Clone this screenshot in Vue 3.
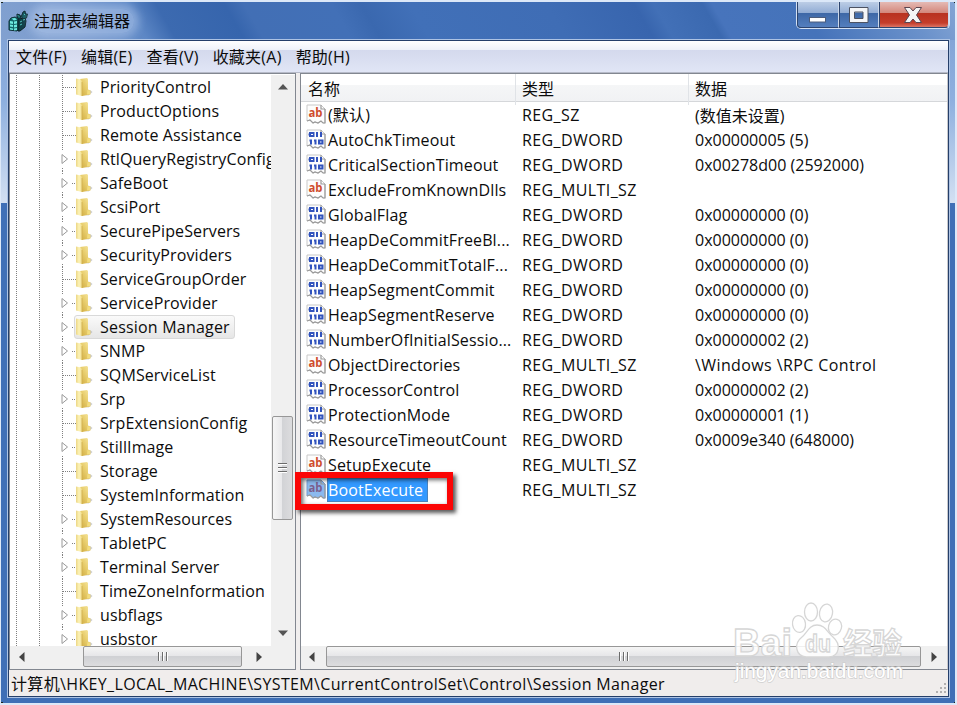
<template>
  <div class="window">
    <span class="corner top-left"></span>
    <span class="corner top-right"></span>
    <span class="corner bottom-left"></span>
    <span class="corner bottom-right"></span>

    <header class="title-bar">
      <div class="title">
        <svg class="app-icon" width="22" height="22" viewBox="0 0 22 22">
          <path d="M1 11l2-3 4-1 4 2v10l-2 2-8-1z" fill="#12686c" stroke="#0e3036" />
          <path d="M2 11l3 .5v2.500L2 13.500zM6 11.500l3-.5v2.500L6 14zM2 14.500l3 .5v2l-3-.5zM6 15l3-.5V17l-3 .5zM2 18l3 .5v1.500l-3-.5zM6 18.500l3-.5v2l-3 .5zM3.500 8.500L7 8l2 1.500-3 1z" fill="#6deae0" />
          <path d="M10 9l7-1 1 3-1 6-5 4h-2z" fill="#0f3f46" stroke="#0a2025" />
          <path d="M9 4l3 1 1 3-2 1-2-2zM15 2l2-1 .5 3 2 0-1 4-4 1-1-3z" fill="#175c62" stroke="#0f2b30" />
          <path d="M10 5.500l1 1M16 4l1 1M12 12l2-1M15 10l2-.5M12 15l2-1" stroke="#54c4bf" />
        </svg>
        <span class="title-text">注册表编辑器</span>
      </div>
      <div class="controls">
        <button class="control minimize" title="最小化">
          <svg width="20" height="20" viewBox="0 0 20 20">
            <rect x="1.500" y="12.500" width="16" height="4.500" fill="#fff" stroke="#4c5d7c" />
          </svg>
        </button>
        <button class="control maximize" title="最大化">
          <svg width="20" height="20" viewBox="0 0 20 20">
            <path d="M.5 2.500h18.500v15H.5zM5.500 7v6.500h8.500V7z" fill="#f4f5f7" fill-rule="evenodd" stroke="#4c5262" />
          </svg>
        </button>
        <button class="control close" title="关闭">
          <svg width="20" height="20" viewBox="0 0 20 20">
            <path d="M.5 2.500h5.500L9 6l3-3.500h5.500L12.500 10l5 7.500H12L9 14l-3 3.500H.5l5-7.500z" fill="#f5f5f5" stroke="#5b4550" />
          </svg>
        </button>
      </div>
    </header>

    <main class="client">
      <nav class="menu">
        <span v-for="item in menus" :key="item" class="menu-item">{{ item }}</span>
      </nav>

      <div class="panes">
        <section class="tree-pane">
          <div class="tree-top">
            <div class="tree">
              <div
                  v-for="node in nodes"
                  :key="node.name"
                  class="node"
                  :class="{ expandable: node.children, selected: node.name === selectedKey }"
              >
                <span class="guide"></span>
                <span class="guide"></span>
                <span class="branch">
                  <svg v-if="node.children" class="arrow" width="8" height="12" viewBox="0 0 8 12">
                    <path d="M1 1.500v9l5.500-4.500z" fill="#fff" stroke="#999" />
                  </svg>
                </span>
                <span class="node-label">
                  <svg class="folder" width="18" height="20" viewBox="0 0 18 20">
                    <path d="M10 18l5-5 2.500 2-4 3.500z" fill="#a9abb0" opacity=".6" />
                    <path d="M5 2l7-1 1 1v10.500l2.500 1v4L7 19z" fill="url(#folderBack)" />
                    <path d="M1 1.500l5 1 1 2.500v14l-6-1.500z" fill="url(#folderFront)" />
                    <path d="M7 5v14" stroke="#cfae50" stroke-width=".8" />
                    <path d="M12.500 13l2.500 1v3l-3 .5z" fill="#f3dd7e" />
                  </svg>
                  <span class="node-name">{{ node.name }}</span>
                </span>
              </div>
            </div>
            <div class="scroll vertical">
              <svg class="scroll-arrow" width="10" height="6" viewBox="0 0 10 6"><path d="M0 5.500L5 0l5 5.500z" fill="#555" /></svg>
              <div class="thumb"><i></i><i></i><i></i></div>
              <svg class="scroll-arrow" width="10" height="6" viewBox="0 0 10 6"><path d="M0 .5h10L5 6z" fill="#555" /></svg>
            </div>
          </div>
          <div class="scroll horizontal">
            <svg class="scroll-arrow" width="6" height="10" viewBox="0 0 6 10"><path d="M5.500 0v10L0 5z" fill="#444" /></svg>
            <div class="thumb"><i></i><i></i><i></i></div>
            <svg class="scroll-arrow" width="6" height="10" viewBox="0 0 6 10"><path d="M.5 0v10L6 5z" fill="#444" /></svg>
          </div>
        </section>

        <section class="list-pane">
          <div class="list-header">
            <span class="head">名称</span>
            <span class="head">类型</span>
            <span class="head">数据</span>
          </div>
          <div class="list">
            <div
                v-for="value in values"
                :key="value.name"
                class="value"
                :class="{ selected: value.name === selectedValue }"
            >
              <span class="name-cell">
                <svg class="value-icon" width="21" height="21" viewBox="0 0 21 21">
                  <path d="M1 1h14l4 4v14h-2l-2-2-3 2-3-1-2 1-3-3-3 1z" class="paper" />
                  <path d="M15 1v4h4M19 5v14h-2l-2-2-3 2-3-1-2 1-3-3-3 1" fill="none" stroke="#9b9b9b" stroke-width="1.200" />
                  <text v-if="isString(value.type)" class="ab" x="2.500" y="13" textLength="14" lengthAdjust="spacingAndGlyphs">ab</text>
                  <g v-else fill="none" stroke="#3153bd" stroke-width="2">
                    <rect x="4" y="4" width="3.500" height="3" />
                    <path d="M2.500 5.500H4M11 3v5M15 3v5M5 10.500v5M9.500 10.500v5M3.500 11.500H5M8 11.500h1.500" />
                    <rect x="13" y="11.500" width="3.500" height="3" />
                  </g>
                </svg>
                <span class="value-name">{{ value.name }}</span>
              </span>
              <span class="type-cell">{{ value.type }}</span>
              <span class="data-cell" :class="{ words: value.data.startsWith('\\') }">{{ value.data }}</span>
            </div>
          </div>
          <div class="scroll horizontal wide">
            <svg class="scroll-arrow" width="6" height="10" viewBox="0 0 6 10"><path d="M5.500 0v10L0 5z" fill="#444" /></svg>
            <div class="thumb"><i></i><i></i><i></i></div>
            <svg class="scroll-arrow" width="6" height="10" viewBox="0 0 6 10"><path d="M.5 0v10L6 5z" fill="#444" /></svg>
          </div>
        </section>
      </div>

      <footer class="status">
        <span>计算机\HKEY_LOCAL_MACHINE\SYSTEM\CurrentControlSet\Control\Session Manager</span>
        <svg class="grip" width="12" height="12" viewBox="0 0 12 12">
          <path d="M9 1h2v2H9zM5 5h2v2H5zM9 5h2v2H9zM1 9h2v2H1zM5 9h2v2H5zM9 9h2v2H9z" fill="#b2b0b0" />
        </svg>
      </footer>
    </main>

    <div class="marker"></div>

    <svg class="watermark" width="190" height="95" viewBox="0 0 190 95">
      <g class="logo">
        <ellipse cx="65" cy="34" rx="6.500" ry="8.500" transform="rotate(-8 65 34)" />
        <ellipse cx="77" cy="22" rx="6.500" ry="9" />
        <ellipse cx="92" cy="23" rx="6.500" ry="9" transform="rotate(10 92 23)" />
        <ellipse cx="101" cy="37" rx="6.500" ry="8" transform="rotate(15 101 37)" />
        <path d="M83 35c-8 0-10 8-15 12-9 7-6 19 4 20 5 0 17 0 23 0 11-1 12-13 4-20-6-5-8-12-16-12z" />
        <text class="baidu" x="-1" y="66" textLength="59" lengthAdjust="spacingAndGlyphs">Bai</text>
        <text class="du" x="71" y="62" textLength="26" lengthAdjust="spacingAndGlyphs">du</text>
        <text class="jingyan" x="109" y="64" textLength="59" lengthAdjust="spacingAndGlyphs">经验</text>
      </g>
      <text class="site" x="1" y="88" textLength="168" lengthAdjust="spacingAndGlyphs">jingyan.baidu.com</text>
    </svg>

    <svg class="defs" width="0" height="0">
      <defs>
        <linearGradient id="folderBack" x1="0" y1="1" x2="1" y2="0"><stop stop-color="#cfa93c" /><stop offset=".55" stop-color="#e9cf70" /><stop offset="1" stop-color="#f8eaa8" /></linearGradient>
        <linearGradient id="folderFront"><stop stop-color="#ecd684" /><stop offset=".5" stop-color="#fcf3b8" /><stop offset="1" stop-color="#f1dd8c" /></linearGradient>
      </defs>
    </svg>
  </div>
</template>

<script setup>
import { ref } from 'vue'

const menus = ['文件(F)', '编辑(E)', '查看(V)', '收藏夹(A)', '帮助(H)']

const selectedKey = ref('Session Manager')
const selectedValue = ref('BootExecute')

// ─── REGISTRY KEYS ────────────────────────────────────────────────────────────
const nodes = [
  { name: 'PriorityControl' },
  { name: 'ProductOptions' },
  { name: 'Remote Assistance' },
  { name: 'RtlQueryRegistryConfig', children: true },
  { name: 'SafeBoot', children: true },
  { name: 'ScsiPort', children: true },
  { name: 'SecurePipeServers', children: true },
  { name: 'SecurityProviders', children: true },
  { name: 'ServiceGroupOrder' },
  { name: 'ServiceProvider', children: true },
  { name: 'Session Manager', children: true },
  { name: 'SNMP', children: true },
  { name: 'SQMServiceList' },
  { name: 'Srp', children: true },
  { name: 'SrpExtensionConfig' },
  { name: 'StillImage', children: true },
  { name: 'Storage' },
  { name: 'SystemInformation' },
  { name: 'SystemResources', children: true },
  { name: 'TabletPC', children: true },
  { name: 'Terminal Server', children: true },
  { name: 'TimeZoneInformation' },
  { name: 'usbflags', children: true },
  { name: 'usbstor', children: true },
]

// ─── VALUES ───────────────────────────────────────────────────────────────────
const values = [
  { name: '(默认)', type: 'REG_SZ', data: '(数值未设置)' },
  { name: 'AutoChkTimeout', type: 'REG_DWORD', data: '0x00000005 (5)' },
  { name: 'CriticalSectionTimeout', type: 'REG_DWORD', data: '0x00278d00 (2592000)' },
  { name: 'ExcludeFromKnownDlls', type: 'REG_MULTI_SZ', data: '' },
  { name: 'GlobalFlag', type: 'REG_DWORD', data: '0x00000000 (0)' },
  { name: 'HeapDeCommitFreeBl...', type: 'REG_DWORD', data: '0x00000000 (0)' },
  { name: 'HeapDeCommitTotalF...', type: 'REG_DWORD', data: '0x00000000 (0)' },
  { name: 'HeapSegmentCommit', type: 'REG_DWORD', data: '0x00000000 (0)' },
  { name: 'HeapSegmentReserve', type: 'REG_DWORD', data: '0x00000000 (0)' },
  { name: 'NumberOfInitialSessio...', type: 'REG_DWORD', data: '0x00000002 (2)' },
  { name: 'ObjectDirectories', type: 'REG_MULTI_SZ', data: '\\Windows \\RPC Control' },
  { name: 'ProcessorControl', type: 'REG_DWORD', data: '0x00000002 (2)' },
  { name: 'ProtectionMode', type: 'REG_DWORD', data: '0x00000001 (1)' },
  { name: 'ResourceTimeoutCount', type: 'REG_DWORD', data: '0x0009e340 (648000)' },
  { name: 'SetupExecute', type: 'REG_MULTI_SZ', data: '' },
  { name: 'BootExecute', type: 'REG_MULTI_SZ', data: '' },
]

function isString(type) {
  return type !== 'REG_DWORD'
}
</script>

<style>
body {
  margin: 0;
  overflow: hidden;
}
</style>

<style scoped>
* {
  box-sizing: border-box;
}

.window {
  position: relative;
  display: flex;
  flex-direction: column;
  width: 957px;
  height: 705px;
  padding: 0 6px 6px 7px;
  overflow: hidden;
  font-family: 'Open Sans', 'Noto Sans CJK SC', sans-serif;
  font-size: 16px;
  color: #0c0c0c;
  white-space: nowrap;
  border-style: solid;
  border-color: #dce8f8;
  border-width: 2px 2px 2px 1px;
  background:
    linear-gradient(#7c9ed2 0, #8eb0df 100px, #d3e0f2 201px, transparent 201px) 0 0 / 7px 100% no-repeat,
    linear-gradient(#7c9ed2 0, #8eb0df 100px, #d3e0f2 201px, transparent 201px) 100% 0 / 6px 100% no-repeat,
    #3f6fb6;
}

.corner {
  position: absolute;
  width: 4px;
  height: 4px;
  background: #18251f;
}
.top-left { left: -2px; top: -3px; }
.top-right { right: -3px; top: -3px; }
.bottom-left { left: -2px; bottom: -3px; }
.bottom-right { right: -3px; bottom: -3px; }

/* ─── TITLE BAR ─────────────────────────────────────────────────────────────── */
.title-bar {
  display: flex;
  flex: none;
  justify-content: space-between;
  height: 38px;
  margin: 0 -6px 0 -7px;
  padding: 0 5px 0 7px;
  background: linear-gradient(60deg, #82a1d0 0, #7a9bce 8%, #5d87c5 15%, #3c6ab0 18%, #3665ad 25%, #426fb5 27%, #4270b7 36%, #3a68af 39%, #4170b8 44%, #3f6db5 58%, #3865ae 67%, #4270b7 69%, #3b69b0 74%, #4774bc 75%, #4573ba 84%, #6b92cb 95%, #83a4d4 100%);
}

.title {
  display: flex;
  align-items: center;
  height: 37px;
}

.title-text {
  margin-left: 4px;
  padding: 0 4px 0 0;
  line-height: 24px;
  background: rgba(190, 211, 241, 0.45);
  border-radius: 12px;
  box-shadow: 0 0 9px 5px rgba(190, 211, 241, 0.45);
}

.controls {
  display: flex;
  height: 29px;
  margin-top: -2px;
  border: 1px solid #d3e0f3;
  border-top: 0;
  border-radius: 0 0 5px 5px;
}

.control {
  display: flex;
  align-items: center;
  justify-content: center;
  width: 42px;
  height: 28px;
  padding: 2px 0 0;
  border: 1px solid #2d456f;
  border-top: 0;
  border-right-color: #cbd8ea;
  background: linear-gradient(#c4d3e9 0, #91acd4 48%, #3e68a7 50%, #547fbe 100%);
}

.minimize {
  border-radius: 0 0 0 4px;
}
.maximize {
  width: 40px;
}
.close {
  width: 70px;
  border-radius: 0 0 4px 0;
  background: linear-gradient(#e8c3bf 0, #d3877b 48%, #b83220 50%, #c43d2b 85%, #dc7565 100%);
}

/* ─── MENU ─────────────────────────────────────────────────────────────────── */
.client {
  display: flex;
  flex: 1;
  flex-direction: column;
  min-height: 0;
  border: 1px solid #253f6a;
  box-shadow: 0 0 0 1px #adc3e4;
  background: #f0eeee;
}

.menu {
  display: flex;
  flex: none;
  gap: 14px;
  height: 32px;
  padding: 2px 0 0 7px;
  line-height: 29px;
  letter-spacing: 0.24px;
  border-bottom: 1px solid #b6bac8;
  background: linear-gradient(#fff 0, #eef1f9 9px, #d4d9ed 9px, #e1e6f6 32px);
}

/* ─── PANES ────────────────────────────────────────────────────────────────── */
.panes {
  display: flex;
  flex: 1;
  gap: 4px;
  min-height: 0;
}

.tree-pane,
.list-pane {
  display: flex;
  flex-direction: column;
  border: 1px solid #828790;
  background: #fff;
}

.tree-pane {
  width: 287px;
}

.list-pane {
  flex: 1;
  min-width: 0;
  border-right-color: #c8c8cc;
}

.tree-top {
  display: flex;
  flex: 1;
  min-height: 0;
  padding-top: 1px;
}

.tree {
  width: 261px;
  overflow: hidden;
  letter-spacing: 0.1px;
}

.node {
  display: flex;
  align-items: center;
  height: 24px;
}

.guide,
.branch {
  flex: none;
  width: 23px;
  height: 24px;
  background: repeating-linear-gradient(#808080 0 1px, transparent 1px 2px) 6px 0 / 1px 24px no-repeat;
}

.branch {
  width: 20px;
  background:
    repeating-linear-gradient(#808080 0 1px, transparent 1px 2px) 6px 0 / 1px 24px no-repeat,
    repeating-linear-gradient(90deg, #808080 0 1px, transparent 1px 2px) 7px 12px / 13px 1px no-repeat;
}
.expandable .branch {
  background:
    repeating-linear-gradient(#808080 0 1px, transparent 1px 2px) 6px 0 / 1px 3px no-repeat,
    repeating-linear-gradient(#808080 0 1px, transparent 1px 2px) 6px 21px / 1px 3px no-repeat,
    repeating-linear-gradient(90deg, #808080 0 1px, transparent 1px 2px) 16px 12px / 4px 1px no-repeat;
}

.arrow {
  display: block;
  margin: 6px 0 0 5px;
}

.node-label {
  display: flex;
  align-items: center;
  height: 24px;
  margin-left: -2px;
  padding: 0 4px 0 0;
  border: 1px solid transparent;
  border-radius: 3px;
}
.selected .node-label {
  border-color: #d9d9d9;
  background: linear-gradient(#fafafa, #e6e6e6);
}
.selected .node-name {
  letter-spacing: 0.2px;
}

.folder {
  flex: none;
  margin-right: 7px;
}

/* ─── SCROLL BARS ──────────────────────────────────────────────────────────── */
.scroll {
  display: flex;
  align-items: center;
  flex: none;
  background: #f0f0f0;
}

.thumb {
  display: flex;
  align-items: center;
  justify-content: center;
  gap: 2px;
  border: 1px solid #979797;
  border-radius: 2px;
}
.thumb i {
  width: 2px;
  height: 9px;
  border-left: 1px solid #6b6b6b;
  border-right: 1px solid #fff;
}

.vertical {
  flex-direction: column;
  width: 24px;
  padding: 9px 2px 10px 1px;
}
.vertical .thumb {
  flex-direction: column;
  width: 21px;
  height: 104px;
  margin-top: 326px;
  margin-bottom: auto;
  background: linear-gradient(90deg, #f6f6f6 0, #e8e8ea 48%, #d2d3d6 50%, #dcdcde 100%);
}
.vertical .thumb i {
  width: 9px;
  height: 2px;
  border: 0;
  border-top: 1px solid #6b6b6b;
  border-bottom: 1px solid #fff;
}

.horizontal {
  height: 23px;
  padding: 0 33px 2px 9px;
}
.horizontal .thumb {
  width: 159px;
  height: 21px;
  margin-left: 58px;
  margin-right: auto;
  background: linear-gradient(#f5f5f5 0, #e6e6e8 48%, #d0d1d4 50%, #dcdcde 100%);
}
.wide {
  padding: 0 10px 2px 8px;
}
.wide .thumb {
  flex: 1;
  margin: 0 10px 0 11px;
}

/* ─── VALUE LIST ───────────────────────────────────────────────────────────── */
.list-header {
  display: grid;
  flex: none;
  grid-template-columns: 215px 173px 1fr;
  height: 28px;
  line-height: 31px;
  border-bottom: 1px solid #d5d7da;
  background: linear-gradient(#fff 0, #fff 40%, #f5f6f7 41%, #f1f2f4 100%);
}
.head {
  padding-left: 6px;
  border-right: 1px solid #e0e3e7;
}
.head:first-child {
  padding-left: 7px;
}
.head:last-child {
  border-right: 0;
}

.list {
  flex: 1;
  min-height: 0;
}

.value {
  display: grid;
  grid-template-columns: 221px 173px 1fr;
  align-items: center;
  height: 25px;
}

.name-cell {
  display: flex;
  align-items: center;
  padding-left: 5px;
  letter-spacing: 0.14px;
}

.value-icon {
  flex: none;
}

.type-cell,
.words {
  letter-spacing: 0.4px;
}

.paper {
  fill: #fdfdfd;
  stroke: #c9c9c9;
}
.ab {
  font: bold 12px 'Open Sans', sans-serif;
  letter-spacing: 0;
  fill: #cf4c2c;
}
.selected .paper {
  fill: #8bb9ee;
  stroke: #709bd1;
}
.selected .ab {
  fill: #7b5f8c;
}

.value-name {
  height: 24px;
  padding: 0 5px 0 1px;
  line-height: 24px;
}
.selected .value-name {
  color: #fff;
  background: #3399ff;
  box-shadow: inset 0 0 0 1px #4b83bd;
}

/* ─── STATUS BAR ───────────────────────────────────────────────────────────── */
.status {
  display: flex;
  flex: none;
  justify-content: space-between;
  height: 26px;
  padding-left: 2px;
  line-height: 28px;
  letter-spacing: 0.35px;
  background: #f0edec;
}
.grip {
  align-self: flex-end;
  margin: 0 1px 2px 0;
}

/* ─── OVERLAYS ─────────────────────────────────────────────────────────────── */
.marker {
  position: absolute;
  left: 294px;
  top: 470px;
  width: 158px;
  height: 38px;
  border: 6px solid #fb0505;
  box-shadow: 3px 3px 4px rgba(0, 0, 0, 0.65), inset 2px 2px 4px rgba(0, 0, 0, 0.6);
}

.watermark {
  position: absolute;
  left: 733px;
  top: 588px;
  overflow: visible;
}
.logo {
  fill: rgba(255, 255, 255, 0.85);
  stroke: #d6d6d6;
  stroke-width: 1.3px;
}
.baidu {
  font: bold 38px 'Liberation Sans', sans-serif;
}
.du {
  font: bold 23px 'Liberation Sans', sans-serif;
}
.jingyan {
  font: bold 30px 'Noto Sans CJK SC', sans-serif;
}
.site {
  font: 20px 'Liberation Sans', sans-serif;
  fill: #fff;
  stroke: #cfcfcf;
  stroke-width: 1.4px;
  paint-order: stroke;
}
.defs {
  position: absolute;
}
</style>
